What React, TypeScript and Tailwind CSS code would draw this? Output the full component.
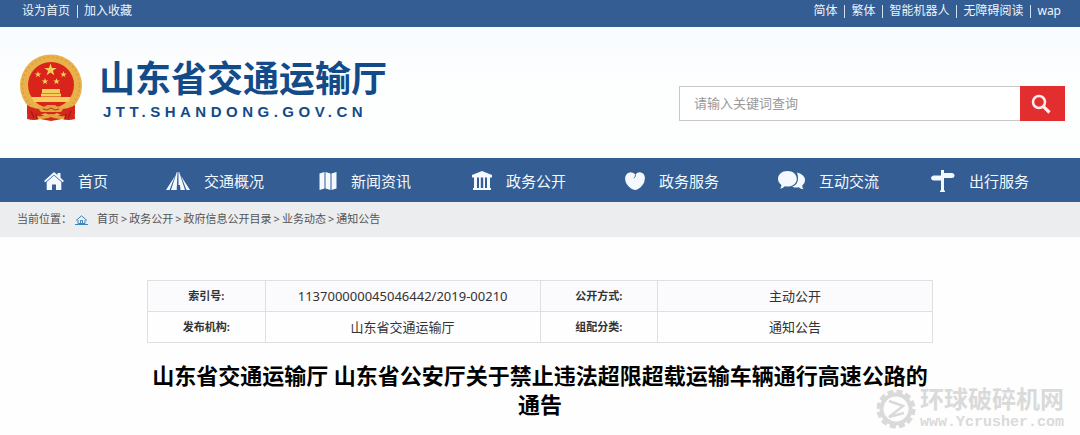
import type { ReactNode } from "react";

function Emblem() {
  const star = "M0 -1 L.24 -.31 L.95 -.31 L.38 .12 L.59 .81 L0 .4 L-.59 .81 L-.38 .12 L-.95 -.31 L-.24 -.31Z";
  return (
    <svg viewBox="0 0 64 68" className="h-[68px] w-16 shrink-0" role="img" aria-label="国徽">
      <path d="M9 44 L55 44 L56 65 Q49 67 43 65 L32 67 L21 65 Q15 67 8 65Z" fill="#d3271d" />
      <circle cx="32" cy="31.500" r="31" fill="#e9b14a" />
      <circle cx="32" cy="31.500" r="28.500" fill="none" stroke="#dc9c40" strokeWidth="1.500" strokeDasharray="2 2.500" />
      <circle cx="32" cy="31" r="23" fill="#d9241b" />
      <g fill="#f5cf5b">
        <path d={star} transform="translate(31.500 16) scale(6.500)" />
        <path d={star} transform="translate(19 20.500) scale(3.400)" />
        <path d={star} transform="translate(44.500 20.500) scale(3.400)" />
        <path d={star} transform="translate(26 27.500) scale(3.400)" />
        <path d={star} transform="translate(37.500 27.500) scale(3.400)" />
        <path d="M23 35h18v4H23zM22 39.500h20v3H22zM12 43h40l-3 5H15z" />
      </g>
      <path d="M8 51 Q20 58 26 52 Q32 48 38 52 Q44 58 56 51 L56 60 Q45 64 38 59 Q32 62 26 59 Q18 64 8 60Z" fill="#d3271d" />
      <path d="M19 54q7-1 9-3h8q2 2 9 3l-3 4H22zM18 62q8 1 14-2q6 3 14 2l-1 3q-8 0-13-2q-5 2-13 2z" fill="#e5a33d" />
      <path d="M12 57l3 7M17 60l1 5M47 60l-1 5M52 57l-3 7" stroke="#a91611" strokeWidth="1.200" />
      <path d="M24 55l4 1 4-2 4 2 4-1" stroke="#b43a20" fill="none" />
    </svg>
  );
}

const icons: Record<string, ReactNode> = {
  home: (
    <svg viewBox="0 0 20 18" className="h-[18px] w-5" fill="currentColor" aria-hidden="true">
      <path d="M10 0 L13.500 3 V1 H16.500 V5.800 L20 9 L18.700 10.300 L10 2.700 L1.300 10.300 L0 9Z" />
      <path d="M10 3.600 L17.300 10 V18 H12 V12.500 H8 V18 H2.700 V10Z" />
    </svg>
  ),
  road: (
    <svg viewBox="0 0 24 18" className="h-[18px] w-6" fill="currentColor" aria-hidden="true">
      <path d="M10.800 0 L11.500 0 L10.700 18 H5Z" />
      <path d="M9 4 L3.500 18 H0Z" />
      <path d="M12.500 0 L13.200 0 L19 18 H14.500 L14 13 H12.500Z" />
      <path d="M15 4 L24 18 H20.500Z" />
    </svg>
  ),
  map: (
    <svg viewBox="0 0 18 18" className="h-[18px] w-[18px]" fill="currentColor" aria-hidden="true">
      <path d="M.500 1.500 L5.500 0 V16.500 L.500 18Z M6.500 0 L11.500 1.500 V18 L6.500 16.500Z M12.500 1.500 L17.500 0 V16.500 L12.500 18Z" />
    </svg>
  ),
  hall: (
    <svg viewBox="0 0 20 19" className="h-[19px] w-5" fill="currentColor" aria-hidden="true">
      <path d="M10 0 L20 4 V6.500 H0 V4Z M1 17 H19 V19 H1Z M2 6 H5 V18 H2Z M7 6 H8.800 V18 H7Z M11.200 6 H13 V18 H11.200Z M15 6 H18 V18 H15Z" />
    </svg>
  ),
  heart: (
    <svg viewBox="0 0 20 18" className="h-[18px] w-5" fill="currentColor" aria-hidden="true">
      <path d="M10.500 2.500 Q7.500 0 4.500 .400 Q0 1.500 .100 7 Q.500 12.500 6 16.500 Q10 19.200 13.500 16.700 Q19.500 13 19.900 6.500 Q20 1.500 16 .400 Q12.500 -.300 10.500 2.500Z" />
      <path d="M10.500 2.300 Q10.800 4.600 8.800 6.200" fill="none" stroke="#335d93" strokeWidth=".900" />
    </svg>
  ),
  chat: (
    <svg viewBox="0 0 27 19" className="h-[19px] w-[27px]" fill="currentColor" aria-hidden="true">
      <path d="M9.500 0 C15 0 18.800 3.400 18.800 7.800 C18.800 12.300 15 15.600 9.500 15.600 Q8 15.600 6.800 15.300 Q5 17.600 2 17.800 Q3.500 16 3.400 13.900 Q0 11.600 0 7.800 C0 3.400 4 0 9.500 0Z" />
      <path d="M19 1.600 Q27 3.400 27 9.500 Q27 12.600 24.300 14.600 Q24 16.800 25.700 18.300 Q22.500 18.300 20.800 16.300 Q17.200 17 14.300 15.700 Q20 13.500 20 7.800 Q20 4.500 19 1.600Z" />
    </svg>
  ),
  sign: (
    <svg viewBox="0 0 24 22" className="h-[22px] w-6" fill="currentColor" aria-hidden="true">
      <path d="M10 0 H13 V22 H10Z M9 20.500 H14 V22 H9Z M13 3.500 Q13 3 13.500 3 H21.500 Q24 4 23.500 6 Q23 8 21 8 H13Z M2.500 5.500 H10 V10.500 H2.500 Q0 10 0 8 Q0 6 2.500 5.500Z" />
    </svg>
  ),
};

const navItems = [
  { icon: "home", label: "首页" },
  { icon: "road", label: "交通概况" },
  { icon: "map", label: "新闻资讯" },
  { icon: "hall", label: "政务公开" },
  { icon: "heart", label: "政务服务" },
  { icon: "chat", label: "互动交流" },
  { icon: "sign", label: "出行服务" },
];

const crumbs = ["首页", "政务公开", "政府信息公开目录", "业务动态", "通知公告"];

const rows = [
  ["索引号:", "113700000045046442/2019-00210", "公开方式:", "主动公开"],
  ["发布机构:", "山东省交通运输厅", "组配分类:", "通知公告"],
];

function Links({ items }: { items: string[] }) {
  return (
    <ul className="flex items-center gap-[7px]">
      {items.map((item, i) => (
        <li key={item} className="flex items-center gap-[6px]">
          {i > 0 && <span className="h-[13px] w-px bg-[#d5e0ee]" />}
          <a href="#">{item}</a>
        </li>
      ))}
    </ul>
  );
}

function Watermark() {
  return (
    <div className="pointer-events-none absolute right-4 bottom-1 flex items-center gap-1 text-[#dadada]">
      <svg viewBox="0 0 40 40" className="h-10 w-10" fill="none" stroke="currentColor" aria-hidden="true">
        <circle cx="20" cy="20" r="17.500" strokeWidth="4" strokeDasharray="6 3.160" />
        <circle cx="20" cy="20" r="14.500" strokeWidth="4" />
        <path d="M13 12 L27 17 L13 28 L28 24" strokeWidth="2.500" />
      </svg>
      <div className="flex flex-col gap-1">
        <p className="text-[24px] leading-6 font-bold">环球破碎机网</p>
        <p className="font-['Liberation_Mono',monospace] text-[15px] leading-4 font-bold">www.Ycrusher.com</p>
      </div>
    </div>
  );
}

export default function App() {
  return (
    <div className="relative min-h-screen bg-[#fefefe] font-['Noto_Sans','Noto_Sans_CJK_SC',sans-serif] text-[#333]">
      <div className="flex h-[27px] items-center justify-between bg-[#335d93] pr-[19px] pb-[5px] pl-[22px] text-[12px] leading-4 text-[#eef4fb]">
        <Links items={["设为首页", "加入收藏"]} />
        <Links items={["简体", "繁体", "智能机器人", "无障碍阅读", "wap"]} />
      </div>

      <header className="flex h-[131px] justify-between bg-linear-to-b from-[#f8fbff] to-[#fdfefe] to-40% pr-[15px] pl-[19px]">
        <a href="#" className="mt-[27px] flex items-start gap-4">
          <Emblem />
          <span className="flex flex-col text-[#134b89]">
            <span className="text-[36px] leading-[50px] font-bold">山东省交通运输厅</span>
            <span className="pl-1 font-['Liberation_Sans',sans-serif] text-[15px] leading-4 font-bold tracking-[0.3em]">
              JTT.SHANDONG.GOV.CN
            </span>
          </span>
        </a>
        <form className="mt-[59px] flex h-[35px] w-[386px]" onSubmit={(e) => e.preventDefault()}>
          <input
            type="text"
            aria-label="关键词"
            placeholder="请输入关键词查询"
            className="min-w-0 flex-1 border border-r-0 border-[#c8c8cb] bg-white px-[14px] text-[13px] outline-none placeholder:text-[#999]"
          />
          <button type="submit" aria-label="搜索" className="flex w-[45px] items-center justify-center bg-[#e32e30] pr-1 text-[#fdeeee]">
            <svg viewBox="0 0 20 20" className="h-5 w-5" fill="none" stroke="currentColor" aria-hidden="true">
              <circle cx="8" cy="8" r="6" strokeWidth="2.500" />
              <path d="M12.300 12.300 L18.500 18.500" strokeWidth="3.200" />
            </svg>
          </button>
        </form>
      </header>

      <nav className="overflow-hidden bg-[#335d93] pl-11 text-[#f4f9ff]">
        <ul className="-mr-1 grid h-11 grid-cols-[122px_repeat(6,1fr)] items-center pt-px">
          {navItems.map((item) => (
            <li key={item.label}>
              <a href="#" className="flex items-center gap-[14px] text-[15px] leading-6">
                {icons[item.icon]}
                {item.label}
              </a>
            </li>
          ))}
        </ul>
      </nav>

      <div className="flex h-[35px] items-center bg-[#ecedee] pl-[17px] text-[11px] text-[#555]">
        <span>当前位置：</span>
        <svg viewBox="0 0 13 10" className="mr-[9px] ml-[3px] h-[10px] w-[13px]" fill="none" stroke="#3b87bb" aria-hidden="true">
          <path d="M1 5.500 L6.500 .800 L12 5.500 M3 5 V8.500 H10 V5 M5.500 8 V5.500 H7.500 V8 M0 9.500 H13" />
        </svg>
        <ol className="flex">
          {crumbs.map((c, i) => (
            <li key={c}>
              {i > 0 && <span className="mx-[2px]">&gt;</span>}
              <a href="#">{c}</a>
            </li>
          ))}
        </ol>
      </div>

      <main className="mx-auto w-[786px] max-w-full pt-[43px]">
        <table className="w-full table-fixed border-collapse text-center">
          <colgroup>
            <col className="w-[15%]" />
            <col className="w-[35%]" />
            <col className="w-[15%]" />
            <col className="w-[35%]" />
          </colgroup>
          <tbody>
            {rows.map((r) => (
              <tr key={r[0]} className="h-[31px] odd:bg-[#fbfafc]">
                <th scope="row" className="border border-[#dfdfe2] text-[11px] leading-4 font-bold">{r[0]}</th>
                <td className="border border-[#dfdfe2] text-[13px] leading-4">{r[1]}</td>
                <th scope="row" className="border border-[#dfdfe2] text-[11px] leading-4 font-bold">{r[2]}</th>
                <td className="border border-[#dfdfe2] text-[13px] leading-4">{r[3]}</td>
              </tr>
            ))}
          </tbody>
        </table>
        <h1 className="mt-[18px] text-center text-[22px] leading-[29px] font-bold text-black">
          山东省交通运输厅 山东省公安厅关于禁止违法超限超载运输车辆通行高速公路的通告
        </h1>
      </main>
      <Watermark />
    </div>
  );
}
